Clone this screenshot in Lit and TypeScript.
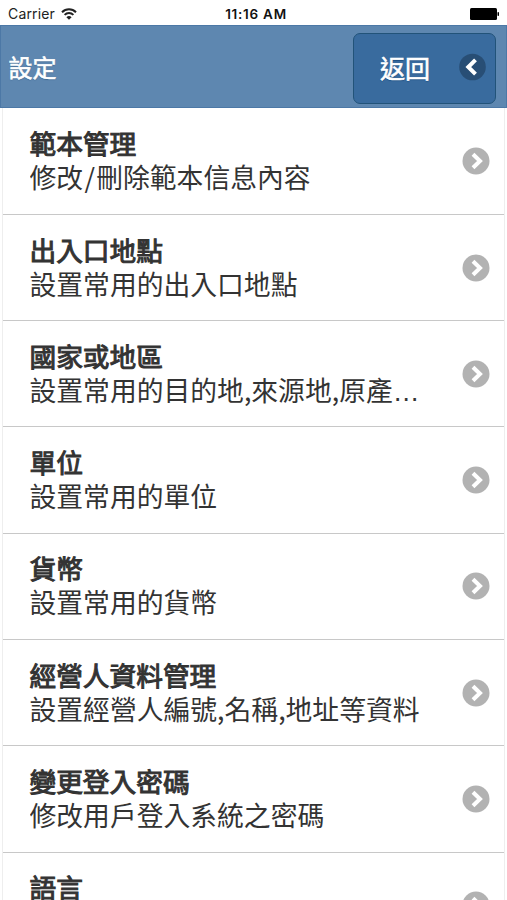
import { LitElement, html, css } from "lit";
import { customElement } from "lit/decorators.js";

const rows = [
  ["範本管理", "修改/刪除範本信息內容"],
  ["出入口地點", "設置常用的出入口地點"],
  ["國家或地區", "設置常用的目的地,來源地,原產地名稱"],
  ["單位", "設置常用的單位"],
  ["貨幣", "設置常用的貨幣"],
  ["經營人資料管理", "設置經營人編號,名稱,地址等資料"],
  ["變更登入密碼", "修改用戶登入系統之密碼"],
  ["語言", ""],
];

@customElement("app-root")
class AppRoot extends LitElement {
  static styles = css`
    :host { display: block; height: 900px; overflow: hidden; background: #fff; color: #333; font-family: "Liberation Sans", "Noto Sans CJK TC", sans-serif; }
    * { box-sizing: border-box; }
    .status { height: 25px; display: grid; grid-template-columns: 1fr auto 1fr; align-items: center; padding: 2px 8px 0; font-size: 14px; font-family: Inter, sans-serif; color: #222; }
    .carrier { display: flex; align-items: center; gap: 6px; }
    .carrier span { letter-spacing: 0.15px; }
    .time { font-weight: 600; font-size: 13.5px; letter-spacing: 0.75px; margin-left: 5px; color: #111; }
    .battery { justify-self: end; }
    svg { display: block; }
    .head { height: 83px; display: flex; align-items: center; justify-content: space-between; padding: 3px 10px 0 7.5px; background: #5e87b0; border: 1px solid #4c78a6; color: #fff; }
    .title { font-size: 24px; -webkit-text-stroke: 0.6px #fff; margin-top: -4px; text-shadow: 0 1px 1px #3e6790; }
    .back { width: 143px; height: 71px; border: 1.5px solid #225379; border-radius: 7px; background: #396b9e; display: flex; align-items: center; justify-content: space-between; padding: 0 9px 0 26px; font-size: 25px; -webkit-text-stroke: 0.6px #fff; text-shadow: 0 1px 1px #194b7e; }
    .back span { margin-top: -3px; }
    .back svg { margin-top: -2px; }
    .list { margin: 0 2px; padding-top: 0.6px; border: solid #eee; border-width: 0 1px; }
    .row { height: 106.3px; border-bottom: 1px solid #c8c8c8; display: flex; align-items: center; justify-content: space-between; padding: 2px 14px 0 26.5px; }
    .row svg { margin-top: -2px; }
    .name { font-size: 26.7px; font-weight: 400; -webkit-text-stroke: 1px #333; line-height: 34px; white-space: nowrap; }
    .desc { font-size: 26.8px; line-height: 34px; height: 34px; width: 398px; overflow: hidden; text-overflow: ellipsis; white-space: nowrap; }
    .mark { font-family: "Noto Sans CJK TC", sans-serif; line-height: 0; }
    .slash { padding: 0 1.3px; }
  `;
  chevron() {
    return html`<svg width="28" height="28" viewBox="0 0 28 28"><circle cx="14" cy="14" r="13.5" fill="#b2b2b2"/><path d="M11 7.2l7 6.800-7 6.800" fill="none" stroke="#fff" stroke-width="4"/></svg>`;
  }
  describe(text: string) {
    return text.split(/([,/])/).map((part) =>
      part === "/" ? html`<span class="mark slash">/</span>` : part === "," ? html`<span class="mark">,</span>` : part
    );
  }
  render() {
    return html`
      <div class="status">
        <div class="carrier"><span>Carrier</span><svg width="16" height="12" viewBox="0 0 16 12"><g fill="none" stroke="#222" stroke-width="2"><path d="M1 4.2a10 10 0 0 1 14 0M3.6 6.9a6.2 6.2 0 0 1 8.800 0"/></g><path d="M8 11.800L5.400 9.200a3.700 3.700 0 0 1 5.200 0z" fill="#222"/></svg></div>
        <span class="time">11:16 AM</span>
        <svg class="battery" width="29" height="12" viewBox="0 0 29 12"><rect width="27" height="12" rx="1.500"/><rect x="27.500" y="4" width="1.500" height="4" rx=".7"/></svg>
      </div>
      <div class="head"><span class="title">設定</span>
        <div class="back"><span>返回</span><svg width="28" height="28" viewBox="0 0 28 28"><circle cx="14.500" cy="14" r="13.300" fill="#284e75"/><path d="M17.500 6.800L10.300 14l7.200 7.200" fill="none" stroke="#fff" stroke-width="4"/></svg></div>
      </div>
      <div class="list">${rows.map(([n, d]) => html`<div class="row"><div><div class="name">${n}</div><div class="desc">${this.describe(d)}</div></div>${this.chevron()}</div>`)}</div>
    `;
  }
}
